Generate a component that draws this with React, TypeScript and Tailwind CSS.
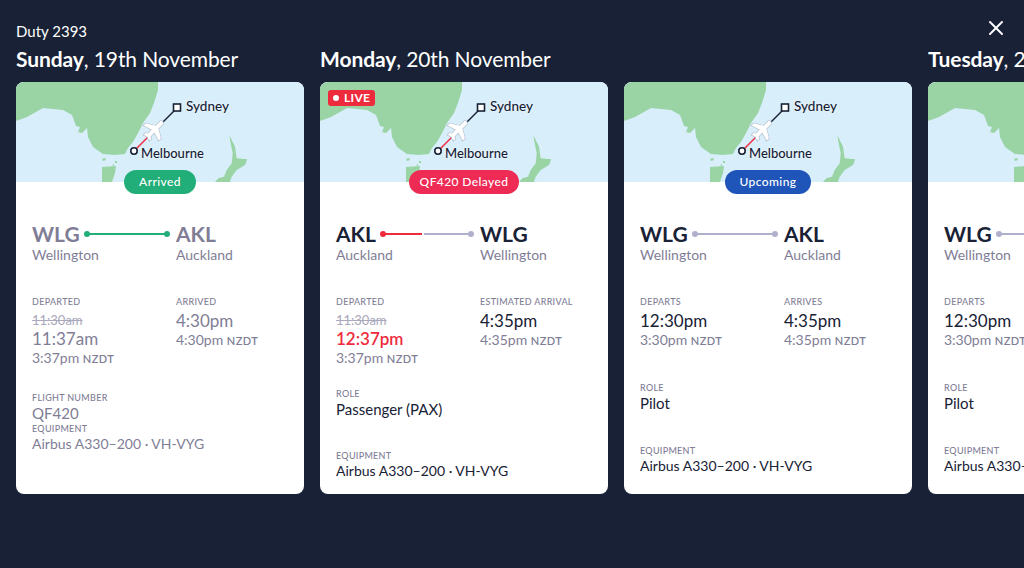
import { X } from "lucide-react";

type Status = "arrived" | "delayed" | "upcoming";

type Row = { label: string; value: string };

type Flight = {
  status: Status;
  from: [string, string];
  to: [string, string];
  left: { label: string; struck?: string; time: string; local: string };
  right: { label: string; time: string; local: string };
  gapTop: string;
  gapMid: string;
  first: Row;
  live?: boolean;
};

const pills = {
  arrived: { text: "Arrived", cls: "bg-[#22ae78] w-[72px]" },
  delayed: { text: "QF420 Delayed", cls: "bg-[#ee2b55] w-[110px]" },
  upcoming: { text: "Upcoming", cls: "bg-[#1f55b8] w-[86px]" },
};

const planePath =
  "M21 16v-2l-8-5V3.5c0-.83-.67-1.5-1.5-1.5S10 2.67 10 3.5V9l-8 5v2l8-2.5V19l-2 1.5V22l3.5-1 3.5 1v-1.5L13 19v-5.5l8 2.5z";

function MapArt() {
  return (
    <svg viewBox="0 0 288 100" className="block w-full h-[100px]">
      <rect width="288" height="100" fill="#d8eefa" />
      <g fill="#9ad4a5">
        <path d="M0 0H142L142 8L138 21L134 31L127 41L122 51L117 60L112 66L109 72L99 73L87 72L77 65L72 55L71 46L66 51L62 50L64 45L60 44L56 33L47 28L27 26L11 35L0 39Z" />
        <path d="M86 85L100 84L99 91L96 100H86Z" />
        <path d="M86 77l3-1 1 2-3 1zM99 79l2 0 0 2-2 0zM96 83l2-1 0 2z" />
        <path d="M213.3 53L219 64.7L220.7 76.3L231.3 77.3L229 83L220.7 88L215.7 94.7L214 100H199L202.3 96.3L208 94.7L210.7 88L215.7 81.3L216.7 71.3L214.7 61.3Z" />
      </g>
      <line x1="118" y1="69" x2="133" y2="54" stroke="#ee2b3c" strokeWidth="1.5" />
      <line x1="146" y1="41" x2="161" y2="26" stroke="#182135" strokeWidth="1.5" />
      <circle cx="118" cy="69" r="3.2" fill="#fff" stroke="#182135" strokeWidth="1.6" />
      <rect x="157.5" y="22" width="7" height="7" fill="#fff" stroke="#182135" strokeWidth="1.6" />
      <g transform="translate(139 48) rotate(45) scale(1.1) translate(-12 -12)">
        <path d={planePath} fill="#b4bcca" stroke="#b4bcca" strokeWidth="1.8" />
        <path d={planePath} fill="#fff" stroke="#fff" strokeWidth="0.7" />
      </g>
    </svg>
  );
}

function MapHeader({ status, live }: { status: Status; live?: boolean }) {
  const pill = pills[status];
  return (
    <div className="relative h-[100px]">
      <MapArt />
      {live && (
        <div className="absolute left-2 top-2 flex h-4 items-center gap-[5px] rounded-[3px] bg-[#ee2b3c] px-[5px] text-[12px] font-bold tracking-[0.3px] text-white">
          <span className="h-[6px] w-[6px] rounded-full bg-white" />
          LIVE
        </div>
      )}
      <span className="absolute left-[170px] top-[17px] text-[13.5px] leading-[14px] font-medium text-[#182135] [text-shadow:0_0_3px_#fff]">
        Sydney
      </span>
      <span className="absolute left-[125px] top-[64px] text-[13px] leading-[14px] font-medium text-[#182135] [text-shadow:0_0_3px_#fff]">
        Melbourne
      </span>
      <div
        className={`absolute left-1/2 top-[88px] flex h-6 -translate-x-1/2 items-center justify-center rounded-full text-[12px] font-medium tracking-[0.4px] text-white ${pill.cls}`}
      >
        {pill.text}
      </div>
    </div>
  );
}

function Label({ children, className = "" }: { children: string; className?: string }) {
  return (
    <div className={`text-[9px] leading-[12px] font-medium tracking-[0.3px] uppercase text-[#7f7e96] ${className}`}>
      {children}
    </div>
  );
}

function Local({ value }: { value: string }) {
  return (
    <div className="-mt-px text-[14px] leading-[20px] text-[#7f7e96]">
      {value} <span className="text-[11px] font-semibold tracking-[0.4px]">NZDT</span>
    </div>
  );
}

function RouteLine({ status }: { status: Status }) {
  if (status === "arrived") {
    return (
      <div className="relative ml-[6px] mr-2 h-[2px] flex-1 bg-[#22ae78]">
        <span className="absolute -left-[2px] -top-[2px] h-[6px] w-[6px] rounded-full bg-[#22ae78]" />
        <span className="absolute -right-[2px] -top-[2px] h-[6px] w-[6px] rounded-full bg-[#22ae78]" />
      </div>
    );
  }
  return (
    <div className="ml-[6px] mr-2 flex flex-1 items-center gap-[2px]">
      {status === "delayed" && (
        <div className="relative h-[2px] w-[40px] bg-[#ee2b3c]">
          <span className="absolute -left-[2px] -top-[2px] h-[6px] w-[6px] rounded-full bg-[#ee2b3c]" />
        </div>
      )}
      <div className="relative h-[2px] flex-1 bg-[#b1b0cc]">
        {status === "upcoming" && (
          <span className="absolute -left-[2px] -top-[2px] h-[6px] w-[6px] rounded-full bg-[#b1b0cc]" />
        )}
        <span className="absolute -right-[2px] -top-[2px] h-[6px] w-[6px] rounded-full bg-[#b1b0cc]" />
      </div>
    </div>
  );
}

function FlightCard({ flight }: { flight: Flight }) {
  const { status } = flight;
  const main = status === "arrived" ? "text-[#7f7e96]" : "text-[#182135]";
  const timeColor = status === "delayed" ? "text-[#ee2b3c] font-semibold" : main;

  return (
    <div className="h-[412px] w-[288px] shrink-0 overflow-hidden rounded-lg bg-white">
      <MapHeader status={status} live={flight.live} />
      <div className="px-4 pt-10">
        <div className="flex">
          <div className="flex w-[144px] items-center">
            <div className={`text-[21px] leading-6 font-bold ${main}`}>{flight.from[0]}</div>
            <RouteLine status={status} />
          </div>
          <div className={`text-[21px] leading-6 font-bold ${main}`}>{flight.to[0]}</div>
        </div>
        <div className="-mt-px flex text-[14px] leading-5 text-[#7f7e96]">
          <div className="w-[144px]">{flight.from[1]}</div>
          <div>{flight.to[1]}</div>
        </div>

        <div className="mt-[31px] flex">
          <div className="w-[144px]">
            <Label>{flight.left.label}</Label>
            {flight.left.struck && (
              <div className="mt-[3px] text-[13px] leading-[18px] text-[#a9a8bc] line-through">
                {flight.left.struck}
              </div>
            )}
            <div className={`text-[17px] leading-5 ${flight.left.struck ? "" : "mt-[3px]"} ${timeColor}`}>
              {flight.left.time}
            </div>
            <Local value={flight.left.local} />
          </div>
          <div>
            <Label>{flight.right.label}</Label>
            <div className={`mt-[3px] text-[17px] leading-5 ${main}`}>{flight.right.time}</div>
            <Local value={flight.right.local} />
          </div>
        </div>

        <Label className={flight.gapTop}>{flight.first.label}</Label>
        <div className={`-mt-px text-[15px] leading-5 ${main}`}>{flight.first.value}</div>
        <Label className={flight.gapMid}>Equipment</Label>
        <div className={`-mt-px text-[14px] leading-5 ${main}`}>Airbus A330–200 · VH-VYG</div>
      </div>
    </div>
  );
}

const arrived: Flight = {
  status: "arrived",
  from: ["WLG", "Wellington"],
  to: ["AKL", "Auckland"],
  left: { label: "Departed", struck: "11:30am", time: "11:37am", local: "3:37pm" },
  right: { label: "Arrived", time: "4:30pm", local: "4:30pm" },
  gapTop: "mt-[23px]",
  gapMid: "mt-0",
  first: { label: "Flight number", value: "QF420" },
};

const delayed: Flight = {
  status: "delayed",
  live: true,
  from: ["AKL", "Auckland"],
  to: ["WLG", "Wellington"],
  left: { label: "Departed", struck: "11:30am", time: "12:37pm", local: "3:37pm" },
  right: { label: "Estimated arrival", time: "4:35pm", local: "4:35pm" },
  gapTop: "mt-[19px]",
  gapMid: "mt-[31px]",
  first: { label: "Role", value: "Passenger (PAX)" },
};

const upcoming: Flight = {
  status: "upcoming",
  from: ["WLG", "Wellington"],
  to: ["AKL", "Auckland"],
  left: { label: "Departs", time: "12:30pm", local: "3:30pm" },
  right: { label: "Arrives", time: "4:35pm", local: "4:35pm" },
  gapTop: "mt-[31px]",
  gapMid: "mt-[32px]",
  first: { label: "Role", value: "Pilot" },
};

const days: { name: string; date: string; flights: Flight[] }[] = [
  { name: "Sunday", date: "19th November", flights: [arrived] },
  { name: "Monday", date: "20th November", flights: [delayed, upcoming] },
  { name: "Tuesday", date: "21st November", flights: [upcoming] },
];

export default function App() {
  return (
    <div className="relative h-[568px] w-[1024px] overflow-hidden bg-[#182135] font-[Lato,sans-serif] text-white">
      <div className="px-4 pt-5 text-[15px] leading-[22px]">Duty 2393</div>

      {/* Close */}
      <button className="absolute right-[16px] top-[16px] text-white">
        <X size={24} strokeWidth={2} />
      </button>

      <div className="mt-[3px] flex gap-4 px-4">
        {days.map((day) => (
          <section key={day.name} className="shrink-0">
            <h2 className="mb-[9px] text-[21px] leading-7 tracking-[-0.1px] whitespace-nowrap">
              <span className="font-bold">{day.name}</span>, {day.date}
            </h2>
            <div className="flex gap-4">
              {day.flights.map((flight, i) => (
                <FlightCard key={i} flight={flight} />
              ))}
            </div>
          </section>
        ))}
      </div>
    </div>
  );
}
